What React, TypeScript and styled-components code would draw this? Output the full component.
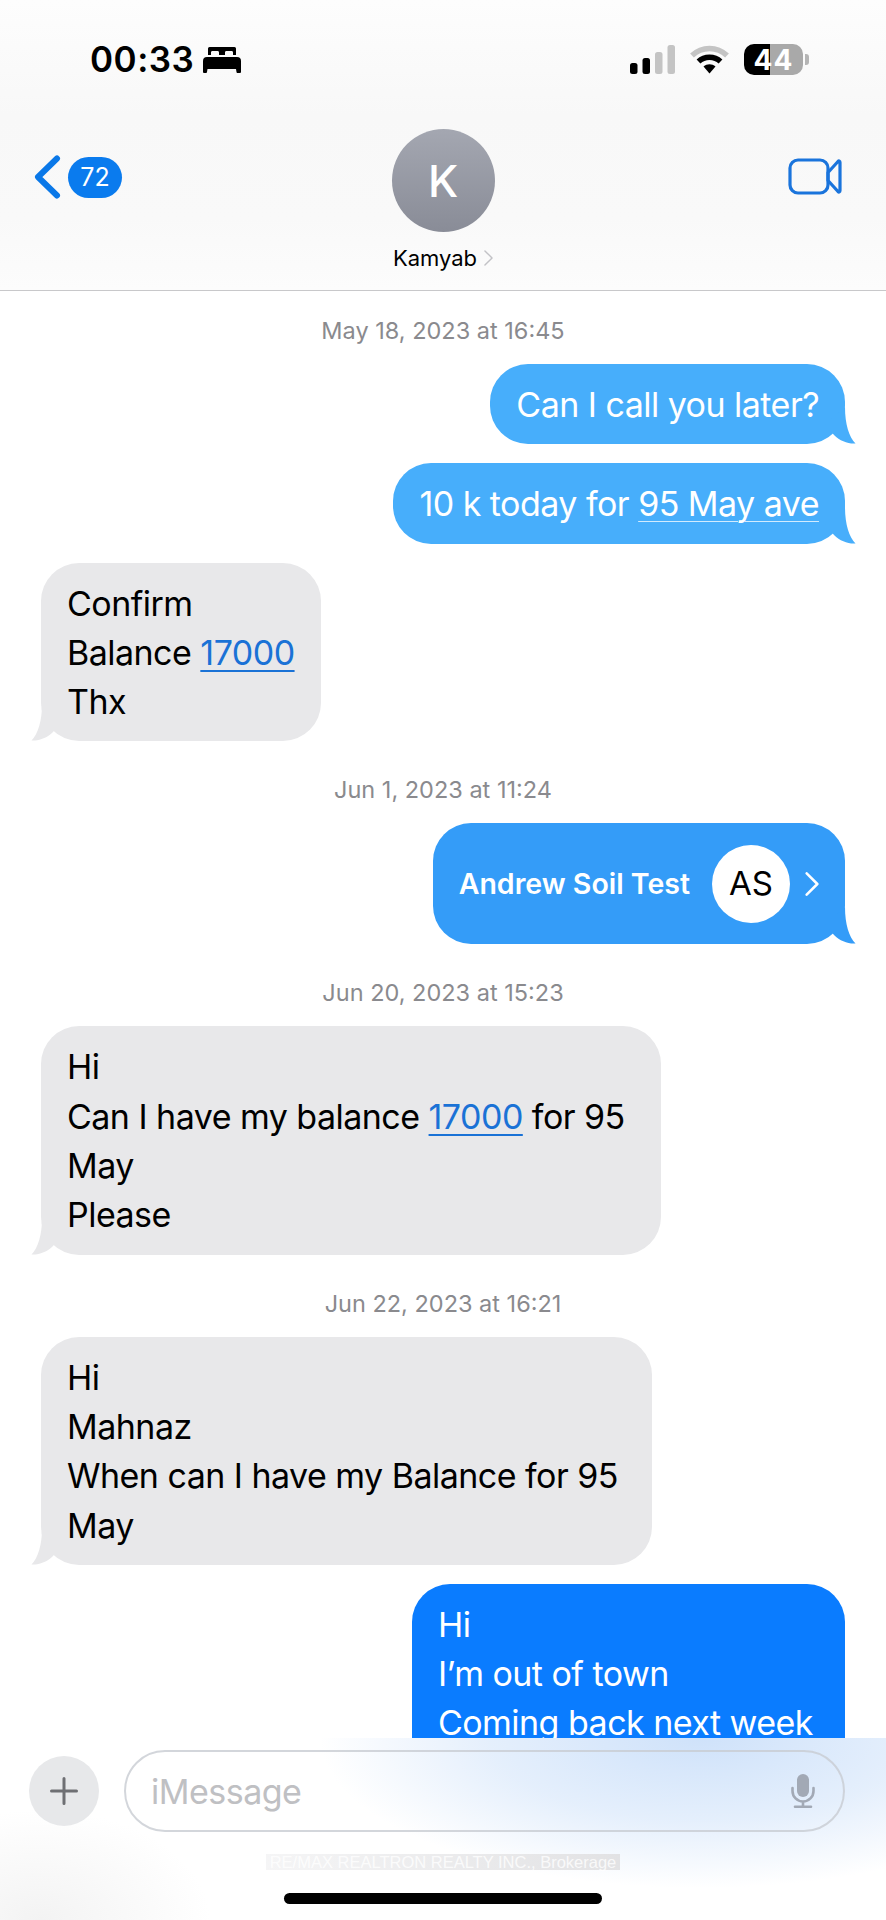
import styled, { createGlobalStyle } from 'styled-components';

const GlobalStyle = createGlobalStyle`
  html, body {
    margin: 0;
    padding: 0;
    background: #fff;
  }
`;

const Page = styled.div`
  position: relative;
  width: 886px;
  height: 1920px;
  overflow: hidden;
  display: flex;
  flex-direction: column;
  background: #fff;
  font-family: Inter, "Liberation Sans", sans-serif;
`;

const Header = styled.header`
  height: 290px;
  flex: none;
  background: linear-gradient(#fdfdfd, #f8f8f8 40%, #f9f9f9 75%, #fcfcfc);
  border-bottom: 1px solid #c8c8ca;
`;

const StatusBar = styled.div`
  display: flex;
  justify-content: space-between;
  align-items: center;
  height: 31px;
  padding: 44px 83px 0 90px;
`;

const StatusLeft = styled.div`
  display: flex;
  align-items: center;
  gap: 9px;
`;

const StatusRight = styled.div`
  display: flex;
  align-items: center;
  gap: 15px;
`;

const Clock = styled.span`
  font-size: 35px;
  line-height: 31px;
  font-weight: 600;
  letter-spacing: 0.5px;
  color: #000;
`;

const Battery = styled.div`
  position: relative;
  width: 59px;
  height: 31px;
  border-radius: 10px;
  display: flex;
  align-items: center;
  justify-content: center;
  background: linear-gradient(to right, #000 44%, #a9a9a9 44%);
  color: #fff;
  font-size: 28px;
  font-weight: 700;
  letter-spacing: 1px;

  &::after {
    content: "";
    position: absolute;
    right: -6px;
    top: 10px;
    width: 4px;
    height: 11px;
    border-radius: 0 3px 3px 0;
    background: #b5b5b5;
  }
`;

const Nav = styled.nav`
  display: grid;
  grid-template-columns: 1fr auto 1fr;
  align-items: start;
  margin-top: 54px;
  padding: 0 34px;
`;

const BackGroup = styled.div`
  display: flex;
  align-items: center;
  gap: 7px;
  margin-top: 26px;
`;

const CountBadge = styled.span`
  width: 54px;
  height: 41px;
  border-radius: 21px;
  display: flex;
  align-items: center;
  justify-content: center;
  background: #0a7bee;
  color: #fff;
  font-size: 25px;
`;

const Contact = styled.div`
  display: flex;
  flex-direction: column;
  align-items: center;
`;

const Avatar = styled.div`
  width: 103px;
  height: 103px;
  border-radius: 50%;
  display: flex;
  align-items: center;
  justify-content: center;
  background: linear-gradient(#a4a7b1, #898c97);
  color: #fff;
  font-size: 44px;
  font-weight: 500;
`;

const ContactName = styled.div`
  display: flex;
  align-items: center;
  gap: 7px;
  margin-top: 12px;
  font-size: 22px;
  line-height: 28px;
  color: #000;
`;

const VideoButton = styled.div`
  justify-self: end;
  margin: 29px 10px 0 0;
  display: flex;
`;

const Thread = styled.main`
  display: flex;
  flex-direction: column;
  padding: 0 41px;
`;

const Stamp = styled.div`
  height: 26px;
  margin: 36px 0 1px;
  text-align: center;
  font-size: 23.5px;
  line-height: 26px;
  color: #8a8a8e;

  &:first-child {
    margin-top: 27px;
  }
`;

const Bubble = styled.div<{ $bg: string; $fg: string; $out?: boolean; $endPad?: number }>`
  position: relative;
  align-self: ${(p) => (p.$out ? 'flex-end' : 'flex-start')};
  margin-top: 19px;
  padding: 16px ${(p) => p.$endPad ?? 26}px 15px 26px;
  border-radius: 38px;
  background: ${(p) => p.$bg};
  color: ${(p) => p.$fg};
  font-size: 34px;
  line-height: 49.3px;
  letter-spacing: -0.53px;
  white-space: nowrap;
`;

const TailShape = styled.svg<{ $out?: boolean }>`
  position: absolute;
  bottom: 0;
  ${(p) => (p.$out ? 'right: -11px;' : 'left: -10px; transform: scaleX(-1);')}
`;

const Line = styled.div``;

const Link = styled.span<{ $color: string; $thin?: boolean }>`
  color: ${(p) => p.$color};
  text-decoration: underline;
  text-decoration-color: ${(p) => (p.$thin ? 'rgba(255, 255, 255, 0.75)' : p.$color)};
  text-decoration-thickness: ${(p) => (p.$thin ? 1 : 2)}px;
  text-underline-offset: 5px;
`;

const ContactCard = styled(Bubble)`
  display: flex;
  align-items: center;
  height: 121px;
  box-sizing: border-box;
  padding: 0 26px;
`;

const CardName = styled.span`
  font-size: 28.5px;
  font-weight: 600;
  letter-spacing: 0;
`;

const CardAvatar = styled.span`
  width: 78px;
  height: 78px;
  margin: 0 15px 0 22px;
  border-radius: 50%;
  display: flex;
  align-items: center;
  justify-content: center;
  background: #fff;
  color: #000;
  font-size: 33px;
  letter-spacing: 0;
`;

const Composer = styled.footer`
  position: absolute;
  left: 0;
  right: 0;
  top: 1738px;
  bottom: 0;
  background:
    radial-gradient(ellipse 380px 150px at 700px 0, #cfe2fa 0%, rgba(207, 226, 250, 0.55) 55%, rgba(207, 226, 250, 0) 100%),
    radial-gradient(ellipse 170px 110px at 40px 182px, #f3f3f3, rgba(243, 243, 243, 0)),
    #fff;
`;

const InputRow = styled.div`
  display: flex;
  align-items: center;
  gap: 25px;
  padding: 12px 41px 0 29px;
`;

const PlusButton = styled.div`
  width: 70px;
  height: 70px;
  flex: none;
  border-radius: 50%;
  display: flex;
  align-items: center;
  justify-content: center;
  background: #e7e8ea;
`;

const InputPill = styled.div`
  flex: 1;
  height: 82px;
  box-sizing: border-box;
  padding: 0 28px 0 25px;
  display: flex;
  align-items: center;
  justify-content: space-between;
  border: 2px solid rgba(200, 204, 210, 0.8);
  border-radius: 41px;
`;

const Placeholder = styled.span`
  font-size: 34px;
  letter-spacing: -0.5px;
  color: #bfc0c3;
`;

const Watermark = styled.div`
  width: 354px;
  height: 16px;
  margin: 22px auto 0;
  background: linear-gradient(to right, #f5f5f6, #e2e2e4);
  color: rgba(255, 255, 255, 0.8);
  font-family: "Liberation Sans", sans-serif;
  font-size: 16.500px;
  line-height: 16px;
  text-align: center;
  white-space: nowrap;
`;

const HomeBar = styled.div`
  width: 318px;
  height: 11px;
  margin: 23px auto 0;
  border-radius: 6px;
  background: #000;
`;

function BedIcon() {
  return (
    <svg width="38" height="26" viewBox="0 0 38 26" fill="#000">
      <path d="M5 1.5A1.5 1.5 0 0 1 6.5 0h25A1.5 1.5 0 0 1 33 1.5V8h-3V5.5c0-1-.6-1.5-1.5-1.5h-5c-.9 0-1.5.5-1.5 1.5V8h-6V5.5c0-1-.6-1.5-1.5-1.5h-5C8.600 4 8 4.500 8 5.500V8H5z" />
      <path d="M4 10h30a4 4 0 0 1 4 4v11a1 1 0 0 1-1 1h-2.500a1 1 0 0 1-1-1l-.5-3H4.500l-.5 3a1 1 0 0 1-1 1H1a1 1 0 0 1-1-1V14a4 4 0 0 1 4-4z" />
    </svg>
  );
}

function SignalIcon() {
  return (
    <svg width="45" height="29" viewBox="0 0 45 29">
      <rect x="0" y="18" width="7.500" height="11" rx="2.500" fill="#000" />
      <rect x="12.500" y="13" width="7.500" height="16" rx="2.500" fill="#000" />
      <rect x="25" y="7" width="7.500" height="22" rx="2.500" fill="#c4c4c4" />
      <rect x="37.500" y="0" width="7.500" height="29" rx="2.500" fill="#c4c4c4" />
    </svg>
  );
}

function WifiIcon() {
  return (
    <svg width="39" height="29" viewBox="0 0 39 29" fill="none" strokeLinecap="butt">
      <path d="M2 10.500C12 1 27 1 37 10.500" stroke="#c4c4c4" strokeWidth="5.500" />
      <path d="M8.500 16.500C14.500 10.800 24.500 10.800 30.500 16.500" stroke="#000" strokeWidth="5.500" />
      <path d="M13.500 21.500C17 18.500 22 18.500 25.500 21.500L19.500 28.500z" fill="#000" />
    </svg>
  );
}

function BackIcon() {
  return (
    <svg width="27" height="44" viewBox="0 0 27 44" fill="none">
      <path d="M23 3.500L4 22l19 18.500" stroke="#0a78e8" strokeWidth="6" strokeLinecap="round" strokeLinejoin="round" />
    </svg>
  );
}

function VideoIcon() {
  return (
    <svg width="54" height="37" viewBox="0 0 54 37" fill="none" stroke="#1a74dc" strokeWidth="3.200" strokeLinejoin="round">
      <rect x="2" y="2" width="38" height="33" rx="8" />
      <path d="M40 14.500L50 3.500c1-1 2-.5 2 1v28c0 1.500-1 2-2 1L40 22.500z" />
    </svg>
  );
}

function Chevron(props: { w: number; h: number; color: string; weight: number }) {
  return (
    <svg width={props.w} height={props.h} viewBox="0 0 10 18" fill="none">
      <path d="M1 1l8 8-8 8" stroke={props.color} strokeWidth={props.weight} strokeLinecap="round" strokeLinejoin="round" />
    </svg>
  );
}

function PlusIcon() {
  return (
    <svg width="28" height="28" viewBox="0 0 28 28" stroke="#6e6f73" strokeWidth="3" strokeLinecap="round">
      <path d="M14 1.500v25M1.500 14h25" />
    </svg>
  );
}

function MicIcon() {
  return (
    <svg width="24" height="34" viewBox="0 0 24 34" fill="none" stroke="#a2a9b5" strokeWidth="2.600" strokeLinecap="round">
      <rect x="6" y="0" width="12" height="23" rx="6" fill="#a2a9b5" stroke="none" />
      <path d="M1.500 14v3a10.500 10.500 0 0 0 21 0v-3M12 27.500v5M4 32.700h16" />
    </svg>
  );
}

function Tail(props: { color: string; out?: boolean }) {
  return (
    <TailShape $out={props.out} width="31" height="41" viewBox="0 0 31 41" fill={props.color}>
      <path d="M20 4C20 21 24 34 30.500 40.500C23 41 15 38 9 32L0 21Z" />
    </TailShape>
  );
}

const LIGHT_BLUE = '#47aefb';
const GRAY = '#e8e8ea';
const LINK_BLUE = '#1a72d6';

export default function App() {
  return (
    <Page>
      <GlobalStyle />
      <Header>
        <StatusBar>
          <StatusLeft>
            <Clock>00:33</Clock>
            <BedIcon />
          </StatusLeft>
          <StatusRight>
            <SignalIcon />
            <WifiIcon />
            <Battery>44</Battery>
          </StatusRight>
        </StatusBar>
        <Nav>
          <BackGroup>
            <BackIcon />
            <CountBadge>72</CountBadge>
          </BackGroup>
          <Contact>
            <Avatar>K</Avatar>
            <ContactName>
              Kamyab
              <Chevron w={9} h={16} color="#c2c2c6" weight={1.6} />
            </ContactName>
          </Contact>
          <VideoButton>
            <VideoIcon />
          </VideoButton>
        </Nav>
      </Header>

      <Thread>
        <Stamp>May 18, 2023 at 16:45</Stamp>
        <Bubble $out $bg={LIGHT_BLUE} $fg="#fff">
          <Line>Can I call you later?</Line>
          <Tail out color={LIGHT_BLUE} />
        </Bubble>
        <Bubble $out $bg={LIGHT_BLUE} $fg="#fff">
          <Line>
            10 k today for <Link $thin $color="#fff">95 May ave</Link>
          </Line>
          <Tail out color={LIGHT_BLUE} />
        </Bubble>
        <Bubble $bg={GRAY} $fg="#000">
          <Line>Confirm</Line>
          <Line>
            Balance <Link $color={LINK_BLUE}>17000</Link>
          </Line>
          <Line>Thx</Line>
          <Tail color={GRAY} />
        </Bubble>

        <Stamp>Jun 1, 2023 at 11:24</Stamp>
        <ContactCard $out $bg="#349cf8" $fg="#fff">
          <CardName>Andrew Soil Test</CardName>
          <CardAvatar>AS</CardAvatar>
          <Chevron w={14} h={24} color="#fff" weight={1.9} />
          <Tail out color="#349cf8" />
        </ContactCard>

        <Stamp>Jun 20, 2023 at 15:23</Stamp>
        <Bubble $endPad={36} $bg={GRAY} $fg="#000">
          <Line>Hi</Line>
          <Line>
            Can I have my balance <Link $color={LINK_BLUE}>17000</Link> for 95
          </Line>
          <Line>May</Line>
          <Line>Please</Line>
          <Tail color={GRAY} />
        </Bubble>

        <Stamp>Jun 22, 2023 at 16:21</Stamp>
        <Bubble $endPad={34} $bg={GRAY} $fg="#000">
          <Line>Hi</Line>
          <Line>Mahnaz</Line>
          <Line>When can I have my Balance for 95</Line>
          <Line>May</Line>
          <Tail color={GRAY} />
        </Bubble>

        <Bubble $out $endPad={32} $bg="#0a7cff" $fg="#fff">
          <Line>Hi</Line>
          <Line>I’m out of town</Line>
          <Line>Coming back next week</Line>
          <Line>Thx</Line>
        </Bubble>
      </Thread>

      <Composer>
        <InputRow>
          <PlusButton>
            <PlusIcon />
          </PlusButton>
          <InputPill>
            <Placeholder>iMessage</Placeholder>
            <MicIcon />
          </InputPill>
        </InputRow>
        <Watermark>RE/MAX REALTRON REALTY INC., Brokerage</Watermark>
        <HomeBar />
      </Composer>
    </Page>
  );
}
